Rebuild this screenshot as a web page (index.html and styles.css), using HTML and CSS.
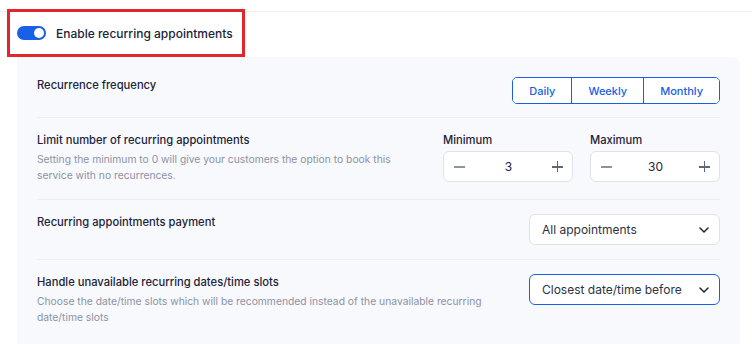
FILE: index.html
```html
<!DOCTYPE html>
<html lang="en">
<head>
  <meta charset="UTF-8">
  <meta name="viewport" content="width=device-width, initial-scale=1.0">
  <title>Recurring appointments</title>
  <link rel="stylesheet" href="styles.css">
</head>
<body>
  <div class="section">
    <!-- Toggle row (highlighted) -->
    <div class="toggle-row">
      <span class="toggle"><span class="knob"></span></span>
      <span class="toggle-label">Enable recurring appointments</span>
    </div>

    <div class="panel">
      <div class="row row-first">
        <div class="info">
          <div class="title">Recurrence frequency</div>
        </div>
        <div class="segments">
          <button class="seg">Daily</button>
          <button class="seg">Weekly</button>
          <button class="seg">Monthly</button>
        </div>
      </div>

      <div class="row row-limit">
        <div class="info">
          <div class="title">Limit number of recurring appointments</div>
          <div class="desc">Setting the minimum to 0 will give your customers the option to book this service with no recurrences.</div>
        </div>
        <div class="fields">
          <div class="field">
            <div class="field-label">Minimum</div>
            <div class="stepper">
              <span class="minus"></span>
              <span class="value">3</span>
              <span class="plus"></span>
            </div>
          </div>
          <div class="field">
            <div class="field-label">Maximum</div>
            <div class="stepper">
              <span class="minus"></span>
              <span class="value">30</span>
              <span class="plus"></span>
            </div>
          </div>
        </div>
      </div>

      <div class="row">
        <div class="info">
          <div class="title">Recurring appointments payment</div>
        </div>
        <div class="select">
          <span>All appointments</span>
          <svg class="chevron" width="10" height="6" viewBox="0 0 10 6"><path d="M1 1l4 4 4-4" fill="none" stroke="#1b2438" stroke-width="1.5" stroke-linecap="round" stroke-linejoin="round"/></svg>
        </div>
      </div>

      <div class="row row-last">
        <div class="info">
          <div class="title">Handle unavailable recurring dates/time slots</div>
          <div class="desc">Choose the date/time slots which will be recommended instead of the unavailable recurring date/time slots</div>
        </div>
        <div class="select select-active">
          <span>Closest date/time before</span>
          <svg class="chevron" width="10" height="6" viewBox="0 0 10 6"><path d="M1 1l4 4 4-4" fill="none" stroke="#1b2438" stroke-width="1.5" stroke-linecap="round" stroke-linejoin="round"/></svg>
        </div>
      </div>
    </div>
  </div>
</body>
</html>
```

FILE: styles.css
```css
/* General styles */
body {
  margin: 0;
  padding: 0;
  background: #fff;
  font-family: Inter, 'Noto Sans', sans-serif;
  color: #1b2438;
}

.section {
  margin-top: 11px;
  border-top: 1px solid #eef0f4;
}

/* Toggle row with the red highlight */
.toggle-row {
  display: flex;
  align-items: center;
  gap: 10px;
  width: 225px;
  height: 42px;
  margin: -3px 0 0 7px;
  padding-left: 7px;
  border: 3px solid #e3262b;
}

.toggle {
  position: relative;
  width: 29px;
  height: 14px;
  border-radius: 7px;
  background: #1860e6;
}

.knob {
  position: absolute;
  top: 2px;
  right: 2px;
  width: 10px;
  height: 10px;
  border-radius: 50%;
  background: #fff;
}

.toggle-label {
  font-size: 12px;
  font-weight: 500;
  color: #1b2438;
}

/* Settings panel */
.panel {
  margin: 0 12px 0 17px;
  padding: 0 20px;
  background: #f8f9fd;
  border-top-right-radius: 8px;
  min-height: 290px;
}

.row {
  display: flex;
  justify-content: space-between;
  align-items: flex-start;
  gap: 24px;
  padding: 14px 0;
  border-bottom: 1px solid #eceef3;
}

.row-first {
  padding: 20px 0 13px;
}

.row-limit {
  padding-bottom: 16px;
}

.row-last {
  border-bottom: none;
}

.info {
  flex: 1;
}

.title {
  font-size: 11.2px;
  font-weight: 500;
  line-height: 16px;
}

.row-first .title {
  line-height: 17px;
}

.desc {
  margin-top: 3px;
  font-size: 10.3px;
  line-height: 16px;
  color: #8c92a3;
}

/* Segmented buttons */
.segments {
  display: flex;
  height: 27px;
  border: 1px solid #1860e6;
  border-radius: 5px;
  overflow: hidden;
  box-sizing: border-box;
}

.seg {
  margin: 0;
  padding: 0 16px;
  border: none;
  border-left: 1px solid #1860e6;
  background: #fff;
  font-family: Inter, sans-serif;
  font-size: 11px;
  font-weight: 500;
  color: #1860e6;
}

.seg:first-child {
  border-left: none;
}

/* Min / max steppers */
.fields {
  display: flex;
  gap: 17px;
}

.field-label {
  font-size: 11.2px;
  font-weight: 500;
  line-height: 16px;
  margin-bottom: 3px;
}

.stepper {
  display: flex;
  align-items: center;
  justify-content: space-between;
  width: 130px;
  height: 31px;
  padding: 0 9px 0 10px;
  box-sizing: border-box;
  background: #fff;
  border: 1px solid #dfe2e8;
  border-radius: 6px;
}

.value {
  font-size: 12px;
  color: #1b2438;
}

.minus, .plus {
  position: relative;
  width: 11px;
  height: 11px;
}

.minus::before, .plus::before, .plus::after {
  content: '';
  position: absolute;
  background: #8b95a1;
  left: 0;
  top: 5px;
  width: 11px;
  height: 1.5px;
}

.plus::before, .plus::after {
  background: #5d6675;
}

.plus::after {
  left: 5px;
  top: 0;
  width: 1.5px;
  height: 11px;
}

/* Dropdowns */
.select {
  display: flex;
  align-items: center;
  justify-content: space-between;
  flex: none;
  width: 191px;
  height: 31px;
  padding: 0 10px 0 12px;
  box-sizing: border-box;
  background: #fff;
  border: 1px solid #dfe2e8;
  border-radius: 6px;
  font-size: 12px;
  color: #2b3344;
}

.select-active {
  border-color: #1860e6;
}
```
